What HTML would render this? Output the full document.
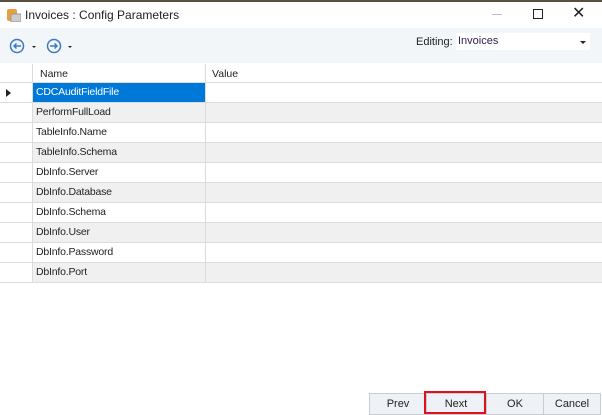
<!DOCTYPE html><html><head><style>
body{margin:0;width:602px;height:415px;background:#fff;font-family:"Liberation Sans",sans-serif;font-size:10.5px;color:#222;position:relative;overflow:hidden}
.a{position:absolute}
.row{position:absolute;left:0;width:602px;height:20px;border-bottom:1px solid #dcdcdc;box-sizing:border-box}
.row .h{position:absolute;left:0;top:0;width:32px;height:19px;border-right:1px solid #dcdcdc;background:#fff}
.row .n{position:absolute;left:33px;top:0;height:19px;border-right:1px solid #dcdcdc;line-height:19px;padding-left:3px;box-sizing:border-box;width:173px;letter-spacing:-0.2px}
.g .n,.g .v{background:#f0f0f0}
.row .v{position:absolute;left:206px;top:0;right:0;height:19px}
.btn{position:absolute;top:393px;height:22px;background:#eef2f6;border:1px solid #c9ccd0;box-sizing:border-box;text-align:center;line-height:21px;font-size:11px}
</style></head><body>
<div class="a" style="left:0;top:0;width:602px;height:2px;background:#5a5040"></div>
<svg class="a" style="left:7px;top:8px" width="14" height="14"><rect x="0" y="1" width="10" height="12" rx="2" fill="#e8a040"/><rect x="4" y="6" width="10" height="8" fill="#ccc" stroke="#999"/></svg>
<div class="a" style="left:25px;top:8px;font-size:12px;color:#222">Invoices : Config Parameters</div>
<div class="a" style="left:492px;top:14px;width:10px;height:1px;background:#bbb"></div>
<div class="a" style="left:533px;top:9px;width:8px;height:8px;border:1px solid #222"></div>
<div class="a" style="left:572px;top:3px;font-size:16px;color:#222">✕</div>
<div class="a" style="left:0;top:28px;width:602px;height:35px;background:#f3f6f9"></div>
<svg class="a" style="left:8px;top:38px" width="70" height="16"><circle cx="9" cy="8" r="6.5" fill="none" stroke="#3a78c8" stroke-width="1.5"/><path d="M13 8H6M8.5 5.5L6 8l2.5 2.5" fill="none" stroke="#3a78c8" stroke-width="1.5"/><path d="M24 8h4l-2 2z" fill="#222"/><circle cx="46" cy="8" r="6.5" fill="none" stroke="#3a78c8" stroke-width="1.5"/><path d="M42 8h7M46.5 5.5L49 8l-2.5 2.5" fill="none" stroke="#3a78c8" stroke-width="1.5"/><path d="M60 8h4l-2 2z" fill="#222"/></svg>
<div class="a" style="left:416px;top:36px;font-size:11px">Editing:</div>
<div class="a" style="left:456px;top:33px;width:134px;height:17px;background:#fff;line-height:17px;padding-left:2px;box-sizing:border-box;font-size:11px;color:#302050">Invoices</div>
<div class="a" style="left:580px;top:41px;border:3px solid transparent;border-top:3px solid #222;border-bottom:0"></div>
<div class="a" style="left:0;top:64px;width:602px;height:19px;border-bottom:1px solid #dcdcdc;box-sizing:border-box"></div>
<div class="a" style="left:32px;top:64px;width:1px;height:19px;background:#dcdcdc"></div>
<div class="a" style="left:205px;top:64px;width:1px;height:19px;background:#dcdcdc"></div>
<div class="a" style="left:40px;top:68px">Name</div>
<div class="a" style="left:212px;top:68px">Value</div>
<div class="row" style="top:83px"><div class="h"></div><div class="n" style="background:#0078d7;color:#fff">CDCAuditFieldFile</div><div class="v"></div></div>
<div class="a" style="left:6px;top:89px;border:4px solid transparent;border-left:5px solid #222;border-right:0"></div>
<div class="row g" style="top:103px"><div class="h"></div><div class="n">PerformFullLoad</div><div class="v"></div></div>
<div class="row" style="top:123px"><div class="h"></div><div class="n">TableInfo.Name</div><div class="v"></div></div>
<div class="row g" style="top:143px"><div class="h"></div><div class="n">TableInfo.Schema</div><div class="v"></div></div>
<div class="row" style="top:163px"><div class="h"></div><div class="n">DbInfo.Server</div><div class="v"></div></div>
<div class="row g" style="top:183px"><div class="h"></div><div class="n">DbInfo.Database</div><div class="v"></div></div>
<div class="row" style="top:203px"><div class="h"></div><div class="n">DbInfo.Schema</div><div class="v"></div></div>
<div class="row g" style="top:223px"><div class="h"></div><div class="n">DbInfo.User</div><div class="v"></div></div>
<div class="row" style="top:243px"><div class="h"></div><div class="n">DbInfo.Password</div><div class="v"></div></div>
<div class="row g" style="top:263px"><div class="h"></div><div class="n">DbInfo.Port</div><div class="v"></div></div>
<div class="btn" style="left:369px;width:58px">Prev</div>
<div class="btn" style="left:426px;width:60px">Next</div>
<div class="btn" style="left:486px;width:58px">OK</div>
<div class="btn" style="left:543px;width:58px">Cancel</div>
<div class="a" style="left:424px;top:391px;width:62px;height:23px;border:2px solid #e0101c;box-sizing:border-box"></div>
</body></html>
